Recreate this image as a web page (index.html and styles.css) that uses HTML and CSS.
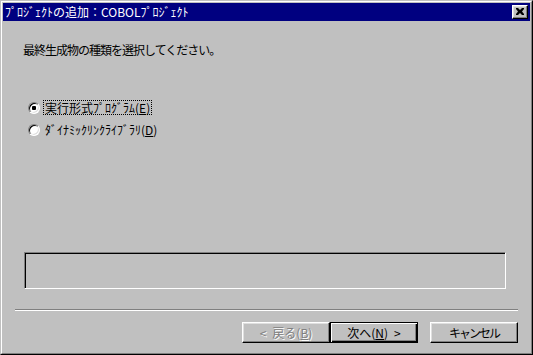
FILE: index.html
```html
<!DOCTYPE html>
<html lang="ja">
<head>
<meta charset="utf-8">
<title>ﾌﾟﾛｼﾞｪｸﾄの追加</title>
<link rel="stylesheet" href="styles.css">
</head>
<body>
<div class="window">
  <div class="frame">
    <div class="titlebar">
      <span class="title">ﾌﾟﾛｼﾞｪｸﾄの追加：COBOLﾌﾟﾛｼﾞｪｸﾄ</span>
      <span class="close"><svg width="8" height="7" viewBox="0 0 8 7"><path d="M0 0h2l2 2l2-2h2v1l-2 2.5l2 2.5v1h-2l-2-2l-2 2h-2v-1l2-2.5l-2-2.5z" fill="#000"/></svg></span>
    </div>
    <div class="content">
      <p class="prompt">最終生成物の種類を選択してください。</p>
      <div class="options">
        <div class="option">
          <span class="radio checked"></span>
          <span class="label focus">実行形式ﾌﾟﾛｸﾞﾗﾑ(<u>E</u>)</span>
        </div>
        <div class="option">
          <span class="radio"></span>
          <span class="label">ﾀﾞｲﾅﾐｯｸﾘﾝｸﾗｲﾌﾞﾗﾘ(<u>D</u>)</span>
        </div>
      </div>
      <div class="status"></div>
      <div class="separator"></div>
      <div class="buttons">
        <span class="btn disabled">&lt;&ensp;戻る(<u>B</u>)</span>
        <span class="btn default">次へ(<u>N</u>)&ensp;&gt;</span>
        <span class="btn cancel">キャンセル</span>
      </div>
    </div>
  </div>
</div>
</body>
</html>
```

FILE: styles.css
```css
html, body {
  margin: 0;
  padding: 0;
  background: #c0c0c0;
}
body {
  font-family: "Noto Sans CJK JP", "DejaVu Sans", sans-serif;
  font-size: 11px;
  color: #000;
}
.window {
  width: 533px;
  height: 355px;
  box-sizing: border-box;
  border: 1px solid;
  border-color: #c0c0c0 #000 #000 #c0c0c0;
  background: #c0c0c0;
}
.frame {
  height: 100%;
  box-sizing: border-box;
  border: 1px solid;
  border-color: #fff #808080 #808080 #fff;
  padding: 1px;
  display: flex;
  flex-direction: column;
}
.titlebar {
  height: 18px;
  flex: none;
  background: #000080;
  color: #fff;
  display: flex;
  align-items: center;
  justify-content: space-between;
  padding-left: 2px;
  padding-right: 2px;
}
.title {
  font-size: 12px;
  line-height: 14px;
  white-space: nowrap;
}
.close {
  width: 16px;
  height: 14px;
  box-sizing: border-box;
  background: #c0c0c0;
  border: 1px solid;
  border-color: #fff #000 #000 #fff;
  box-shadow: inset -1px -1px #808080, inset 1px 1px #dfdfdf;
  display: flex;
  align-items: center;
  justify-content: center;
}
.close svg { display: block; margin-left: -1px; margin-top: -1px; }
.content {
  flex: 1;
  display: flex;
  flex-direction: column;
  padding: 0 12px 0 12px;
}
.prompt {
  margin: 21px 0 0 8px;
  line-height: 15px;
  font-size: 12px;
  letter-spacing: -1px;
}
.options {
  margin: 43px 0 0 13px;
  display: flex;
  flex-direction: column;
  gap: 7px;
}
.option {
  display: flex;
  align-items: center;
  gap: 3px;
  height: 15px;
}
.radio {
  width: 12px;
  height: 12px;
  box-sizing: border-box;
  border-radius: 50%;
  border: 1px solid;
  border-color: #808080 #fff #fff #808080;
  background: #fff;
  box-shadow: inset 1px 1px #000, inset -1px -1px #dfdfdf;
  position: relative;
  flex: none;
}
.radio.checked::after {
  content: "";
  position: absolute;
  left: 3px;
  top: 3px;
  width: 4px;
  height: 4px;
  border-radius: 1px;
  background: #000;
}
.label {
  font-size: 12px;
  line-height: 13px;
  padding: 0 1px;
  border: 1px dotted transparent;
}
.label.focus { border-color: #000; }
.status {
  margin: 115px 12px 0 9px;
  height: 37px;
  box-sizing: border-box;
  border: 1px solid;
  border-color: #808080 #fff #fff #808080;
  box-shadow: inset 1px 1px #000;
}
.separator {
  margin-top: 20px;
  height: 2px;
  box-sizing: border-box;
  border-top: 1px solid #808080;
  border-bottom: 1px solid #fff;
}
.buttons {
  margin-top: 11px;
  display: flex;
  justify-content: flex-end;
}
.btn {
  width: 88px;
  height: 21px;
  box-sizing: border-box;
  border: 1px solid;
  border-color: #fff #000 #000 #fff;
  box-shadow: inset -1px -1px #808080, inset 1px 1px #dfdfdf;
  display: flex;
  align-items: center;
  justify-content: center;
  font-size: 12px;
  white-space: nowrap;
}
.btn.default {
  border: 1px solid #000;
  box-shadow: inset 1px 1px #fff, inset -1px -1px #000, inset -2px -2px #808080;
}
.btn.cancel {
  margin-left: 12px;
  letter-spacing: -2px;
}
.btn.disabled {
  color: #808080;
  text-shadow: 1px 1px #fff;
}
```
